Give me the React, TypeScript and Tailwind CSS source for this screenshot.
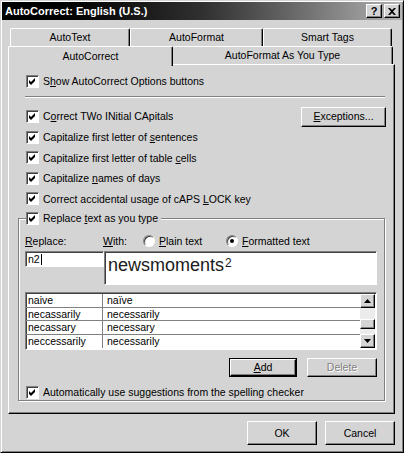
import React from "react";

const raised =
  "border border-t-white border-l-white border-r-black border-b-black shadow-[inset_-1px_-1px_0_#808080]";
const sunken =
  "border border-t-[#808080] border-l-[#808080] border-r-white border-b-white shadow-[inset_1px_1px_0_#404040] bg-white";

function Check({ checked = true }: { checked?: boolean }) {
  return (
    <span className={`flex w-[13px] h-[13px] shrink-0 items-center justify-center ${sunken}`}>
      {checked && (
        <svg width="7" height="7" viewBox="0 0 7 7">
          <path d="M0 2 L2 4 L6 0 L6 3 L2 7 L0 5 Z" fill="#000" />
        </svg>
      )}
    </span>
  );
}

function Radio({ on = false }: { on?: boolean }) {
  return (
    <span className="flex w-[12px] h-[12px] shrink-0 items-center justify-center rounded-full bg-white border border-t-[#808080] border-l-[#808080] border-r-white border-b-white shadow-[inset_1px_1px_0_#404040]">
      {on && <span className="w-[4px] h-[4px] rounded-full bg-black" />}
    </span>
  );
}

function Btn({
  children,
  w,
  h = "h-[20px]",
  def = false,
  disabled = false,
}: {
  children: React.ReactNode;
  w: string;
  h?: string;
  def?: boolean;
  disabled?: boolean;
}) {
  const inner = (
    <div className={`flex h-full w-full items-center justify-center ${raised} ${disabled ? "text-[#808080] [text-shadow:1px_1px_0_#fff]" : ""}`}>
      {children}
    </div>
  );
  if (def) {
    return <div className={`${w} ${h} border border-black shrink-0`}>{inner}</div>;
  }
  return <div className={`${w} ${h} shrink-0`}>{inner}</div>;
}

function Row({ children }: { children: React.ReactNode }) {
  return (
    <div className="flex h-[20.5px] items-center gap-[4px] pl-[17px]">
      <Check />
      <span>{children}</span>
    </div>
  );
}

const U = ({ children }: { children: React.ReactNode }) => (
  <span className="underline underline-offset-[1px]">{children}</span>
);

const entries = [
  ["naive", "naïve"],
  ["necassarily", "necessarily"],
  ["necassary", "necessary"],
  ["neccessarily", "necessarily"],
];

export default function App() {
  return (
    <div className="w-[404px] h-[453px] bg-[#d4d4d4] font-['Liberation_Sans',Arial,sans-serif] text-[10.5px] leading-none text-black border border-t-[#d4d4d4] border-l-[#d4d4d4] border-r-black border-b-black shadow-[inset_1px_1px_0_#fff,inset_-1px_-1px_0_#808080] p-[1px] flex flex-col">
      {/* Title bar */}
      <div className="h-[18px] flex items-center pl-[3px] pr-[2px] bg-linear-to-r from-[#000] via-[#303030] to-[#b4b4b4]">
        <span className="text-white font-bold text-[11px]">AutoCorrect: English (U.S.)</span>
        <div className="ml-auto flex gap-[2px]">
          <div className={`w-[16px] h-[14px] bg-[#d4d4d4] flex items-center justify-center ${raised}`}>
            <span className="font-bold text-[11px]">?</span>
          </div>
          <div className={`w-[16px] h-[14px] bg-[#d4d4d4] flex items-center justify-center ${raised}`}>
            <svg width="8" height="7" viewBox="0 0 8 7">
              <path d="M0 0h2l2 2 2-2h2L5 3.5 8 7H6L4 5 2 7H0l3-3.5z" fill="#000" />
            </svg>
          </div>
        </div>
      </div>

      {/* Tabs */}
      <div className="mt-[8px] ml-[8px] flex h-[18px]">
        <div className="w-[120px] flex items-center justify-center border-t border-l border-r border-t-white border-l-white border-r-black rounded-t-[2px] shadow-[inset_-1px_0_0_#808080]">AutoText</div>
        <div className="w-[133px] flex items-center justify-center border-t border-l border-r border-t-white border-l-white border-r-black rounded-t-[2px] shadow-[inset_-1px_0_0_#808080]">AutoFormat</div>
        <div className="w-[129px] flex items-center justify-center border-t border-l border-r border-t-white border-l-white border-r-black rounded-t-[2px] shadow-[inset_-1px_0_0_#808080]">Smart Tags</div>
      </div>
      <div className="ml-[6px] flex h-[18px] items-end">
        <div className="relative z-10 w-[165px] h-[20px] mb-[-2px] bg-[#d4d4d4] flex justify-center pt-[4px] border-t border-l border-r border-t-white border-l-white border-r-black rounded-t-[2px] shadow-[inset_-1px_0_0_#808080]">AutoCorrect</div>
        <div className="w-[220px] h-[18px] flex items-center justify-center border-t border-r border-t-white border-r-black rounded-t-[2px] shadow-[inset_-1px_0_0_#808080]">AutoFormat As You Type</div>
      </div>

      {/* Panel */}
      <div className={`ml-[6px] w-[387px] h-[350px] flex flex-col ${raised}`}>
        <div className="mt-[9px] h-[14px] flex items-center gap-[4px] pl-[17px]">
          <Check />
          <span>S<U>h</U>ow AutoCorrect Options buttons</span>
        </div>
        <div className="mt-[8px] ml-[16px] w-[360px] h-[2px] border-t border-t-[#808080] border-b border-b-white" />

        <div className="mt-[8px] h-[21px] flex items-center gap-[4px] pl-[17px] pr-[8px]">
          <Check />
          <span>C<U>o</U>rrect TWo INitial CApitals</span>
          <div className="ml-auto">
            <Btn w="w-[85px]">
              <span><U>E</U>xceptions...</span>
            </Btn>
          </div>
        </div>
        <Row>Capitalize first letter of <U>s</U>entences</Row>
        <Row>Capitalize first letter of table <U>c</U>ells</Row>
        <Row>Capitalize <U>n</U>ames of days</Row>
        <Row>Correct accidental usage of cAPS <U>L</U>OCK key</Row>

        <fieldset className="mt-[2px] ml-[9px] w-[367px] border border-[#808080] shadow-[inset_1px_1px_0_#fff,1px_1px_0_#fff] pb-[1px]">
          <legend className="ml-[7px] pr-[3px] bg-[#d4d4d4] h-[14px] flex items-center gap-[4px]">
            <Check />
            <span>Replace <U>t</U>ext as you type</span>
          </legend>

          <div className="mt-[9px] h-[14px] flex items-center pl-[6px]">
            <span className="w-[78px]"><U>R</U>eplace:</span>
            <span className="w-[40px]"><U>W</U>ith:</span>
            <div className="w-[83px] flex items-center gap-[4px]">
              <Radio />
              <span><U>P</U>lain text</span>
            </div>
            <div className="flex items-center gap-[4px]">
              <Radio on />
              <span><U>F</U>ormatted text</span>
            </div>
          </div>

          <div className="mt-[3px] flex items-start pl-[6px]">
            <div className={`w-[79px] h-[16px] flex items-center pl-[2px] ${sunken}`}>
              <span>n2</span>
              <span className="ml-[1px] w-[1px] h-[11px] bg-black" />
            </div>
            <div className={`w-[273px] h-[34px] pl-[3px] pt-[3px] ${sunken}`}>
              <span className="text-[18px] leading-[20px] text-[#1a1a1a] flex items-start">
                newsmoments<span className="text-[12px] leading-none mt-[2px] ml-[1px]">2</span>
              </span>
            </div>
          </div>

          <div className={`mt-[7px] ml-[6px] w-[352px] h-[58px] flex ${sunken}`}>
            <div className="flex-1 flex flex-col pt-[1px]">
              {entries.map(([a, b], i) => (
                <div
                  key={a}
                  className={`h-[13.5px] flex items-center ${i < 3 ? "border-b border-b-[#808080]" : ""}`}
                >
                  <span className="w-[77px] pl-[2px] h-full flex items-center border-r border-r-[#808080]">{a}</span>
                  <span className="pl-[4px]">{b}</span>
                </div>
              ))}
            </div>
            {/* Scrollbar */}
            <div className="w-[15px] h-full flex flex-col mr-[1px] py-[1px]">
              <div className={`h-[14px] bg-[#d4d4d4] flex items-center justify-center ${raised}`}>
                <svg width="7" height="4" viewBox="0 0 7 4"><path d="M3.5 0L7 4H0z" fill="#000" /></svg>
              </div>
              <div className="flex-1 flex flex-col bg-[#ebebeb]">
                <div className="h-[11px]" />
                <div className={`h-[10px] bg-[#d4d4d4] ${raised}`} />
                <div className="flex-1" />
              </div>
              <div className={`h-[14px] bg-[#d4d4d4] flex items-center justify-center ${raised}`}>
                <svg width="7" height="4" viewBox="0 0 7 4"><path d="M0 0H7L3.5 4z" fill="#000" /></svg>
              </div>
            </div>
          </div>

          <div className="mt-[8px] flex justify-end gap-[10px] pr-[7px]">
            <Btn w="w-[68px]" h="h-[19px]" def>
              <span><U>A</U>dd</span>
            </Btn>
            <Btn w="w-[70px]" h="h-[19px]" disabled>
              <span>Delete</span>
            </Btn>
          </div>

          <div className="mt-[8px] h-[14px] flex items-center gap-[4px] pl-[7px]">
            <Check />
            <span>Automatically use suggestions from the spelling checker</span>
          </div>
        </fieldset>
      </div>

      {/* Bottom buttons */}
      <div className="mt-[7px] flex justify-end gap-[8px] pr-[7px]">
        <Btn w="w-[70px]" h="h-[24px]">OK</Btn>
        <Btn w="w-[70px]" h="h-[24px]">Cancel</Btn>
      </div>
    </div>
  );
}
